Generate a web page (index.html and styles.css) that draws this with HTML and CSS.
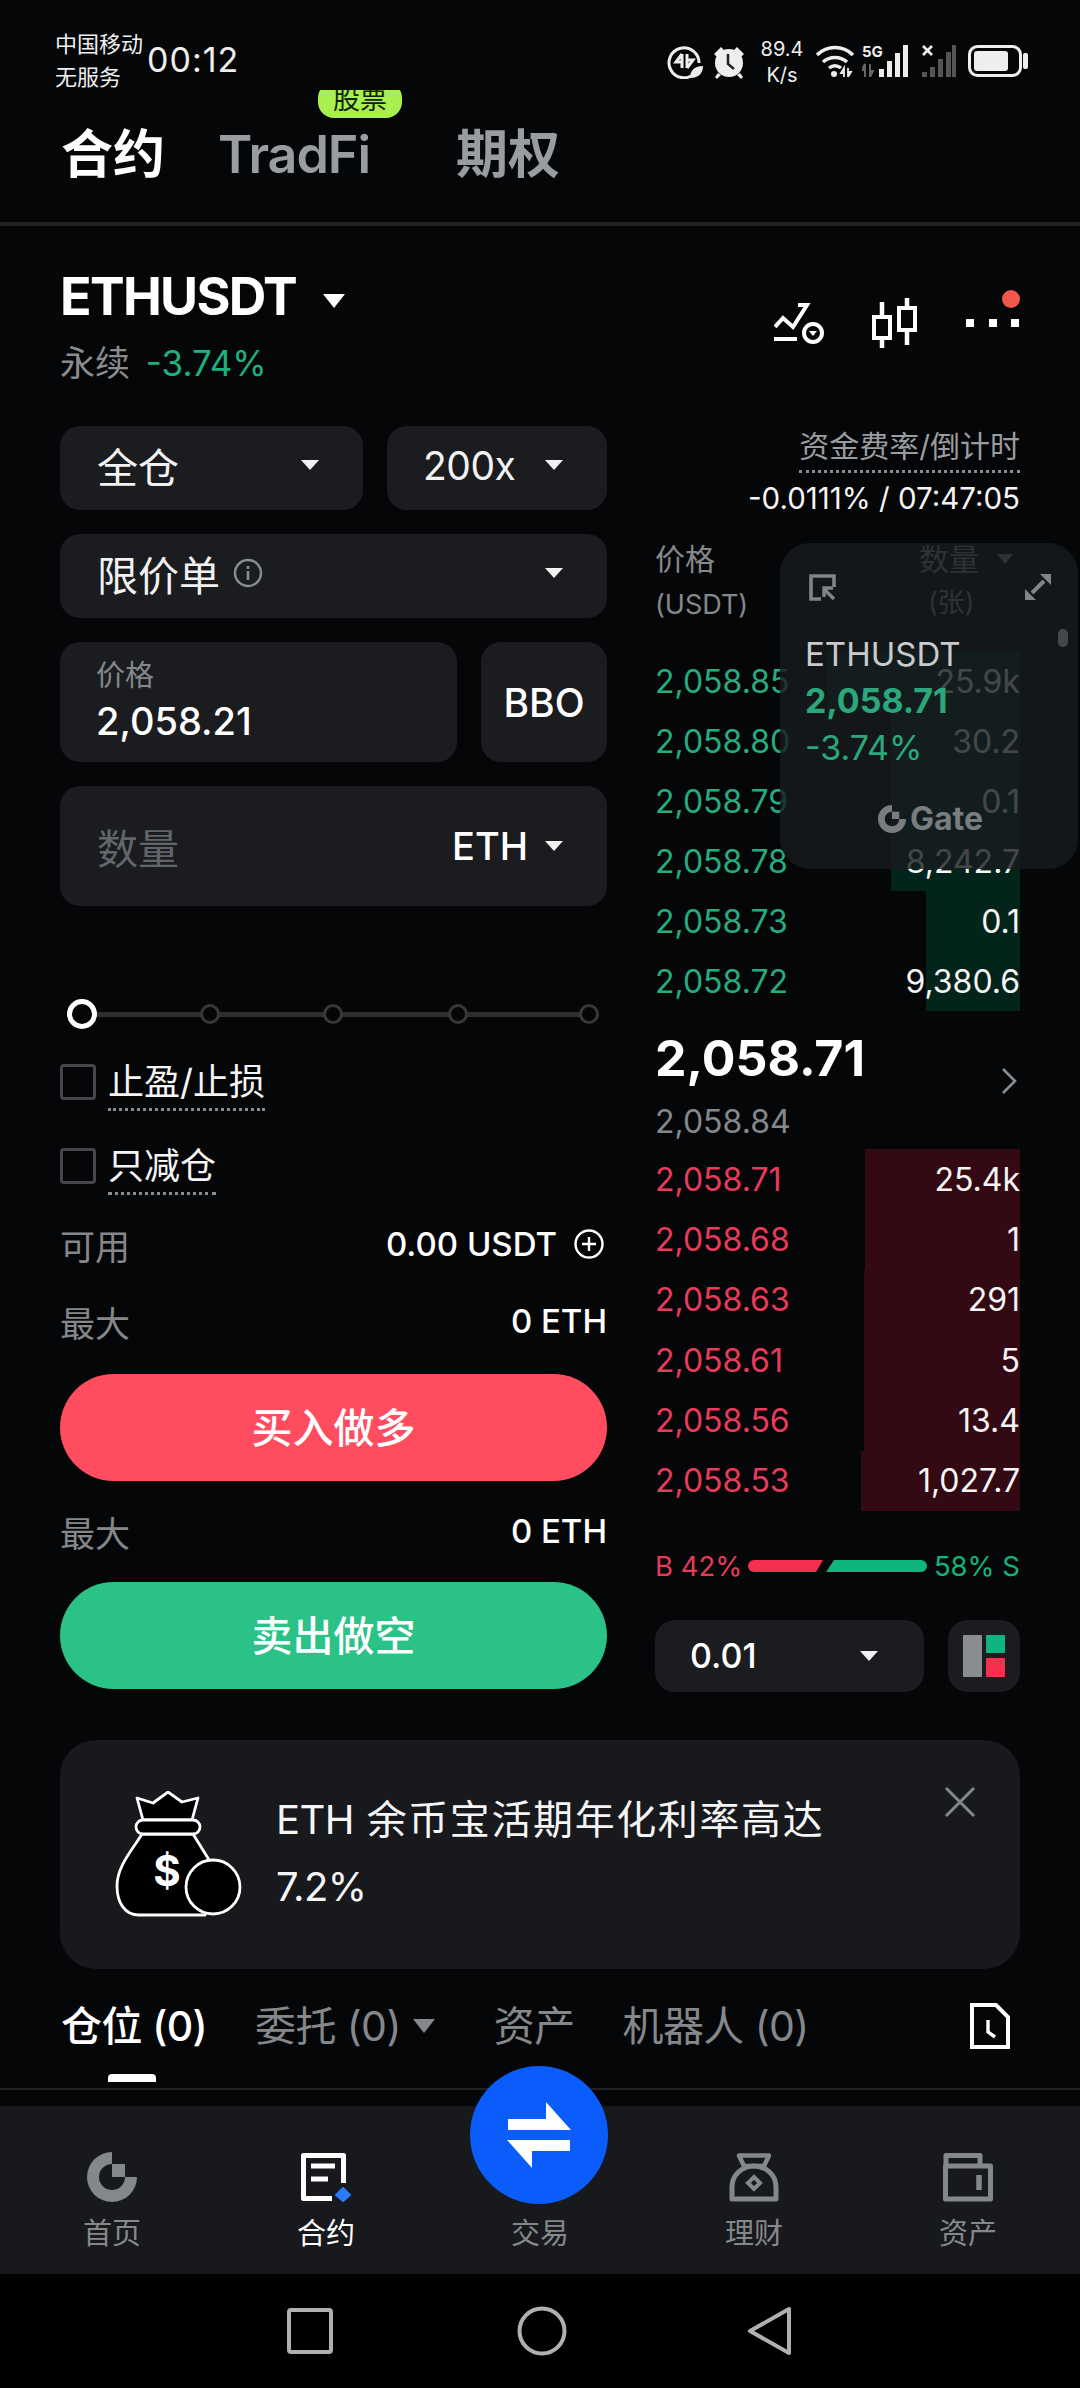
FILE: index.html
```html
<!DOCTYPE html>
<html lang="zh">

<head>
    <meta charset="utf-8">
    <title>ETHUSDT</title>
    <link rel="stylesheet" href="styles.css">
</head>

<body>
    <div class="status-bar">
        <div class="carrier">
            <span>中国移动</span>
            <span>无服务</span>
        </div>
        <div class="clock">00:12</div>
        <div class="status-icons">
            <svg class="st-data" width="36" height="34" viewBox="0 0 36 34">
                <path d="M27 29A15 15 0 1 1 32 18" fill="none" stroke="#eee" stroke-width="3" />
                <path d="M15 9v14M15 9l-6 8h6M20 9v14M20 23l6-8h-6" fill="none" stroke="#eee" stroke-width="3" />
                <path d="M23 33c0-8 5-12 13-12 0 8-5 12-13 12z" fill="#eee" />
            </svg>
            <svg class="st-alarm" width="32" height="34" viewBox="0 0 32 34">
                <path d="M1 9l7-7 3 3-7 7zM31 9l-7-7-3 3 7 7zM5 28l-3 4 2 2 4-4zM27 28l3 4-2 2-4-4z" fill="#eee" />
                <circle cx="16" cy="18" r="14" fill="#eee" />
                <path d="M15 9v10l6 5" fill="none" stroke="#222" stroke-width="2.5" />
            </svg>
            <div class="speed">
                <span>89.4</span>
                <span>K/s</span>
            </div>
            <svg class="st-wifi" width="38" height="32" viewBox="0 0 38 32">
                <path d="M1 10c10-10 26-10 36 0M7 17c7-6 17-6 24 0M13 23c4-3 8-3 12 0" fill="none" stroke="#eee" stroke-width="3.4" />
                <circle cx="18" cy="29" r="3" fill="#eee" />
                <path d="M28 32v-9l-3 5h3M32 23v9l3-5h-3" fill="none" stroke="#eee" stroke-width="1.8" />
            </svg>
            <div class="signal">
                <span class="signal-label">5G</span>
                <svg width="50" height="32" viewBox="0 0 50 32">
                    <path d="M3 32V19l-3 6h3M8 19v13l3-6H8" fill="none" stroke="#666" stroke-width="2" />
                    <rect x="17" y="24" width="5" height="8" fill="#eee" />
                    <rect x="25" y="16" width="5" height="16" fill="#eee" />
                    <rect x="33" y="8" width="5" height="24" fill="#eee" />
                    <rect x="41" y="0" width="5" height="32" fill="#eee" />
                </svg>
            </div>
            <svg class="st-signal2" width="34" height="32" viewBox="0 0 34 32">
                <path d="M1 1l9 9M10 1l-9 9" stroke="#eee" stroke-width="2.6" />
                <rect x="0" y="27" width="5" height="5" fill="#555" />
                <rect x="8" y="22" width="5" height="10" fill="#555" />
                <rect x="16" y="14" width="5" height="18" fill="#555" />
                <rect x="24" y="7" width="5" height="25" fill="#555" />
                <rect x="30" y="0" width="4" height="32" fill="#555" />
            </svg>
            <svg class="st-battery" width="60" height="32" viewBox="0 0 60 32">
                <rect x="1.5" y="1.5" width="51" height="29" rx="8" fill="none" stroke="#eee" stroke-width="3" />
                <rect x="6" y="6" width="34" height="20" rx="3" fill="#eee" />
                <rect x="55" y="8" width="5" height="16" rx="2" fill="#eee" />
            </svg>
        </div>
    </div>

    <div class="market-tabs">
        <span class="market-tab active">合约</span>
        <span class="market-tab tradfi">TradFi<span class="badge">股票</span></span>
        <span class="market-tab">期权</span>
    </div>

    <div class="symbol-bar">
        <div>
            <div class="symbol">ETHUSDT<i class="caret caret-symbol"></i></div>
            <div class="symbol-sub">永续 <span class="change">-3.74%</span></div>
        </div>
        <div class="symbol-icons">
            <svg width="50" height="60" viewBox="0 0 50 60">
                <path d="M1 37l8-9 10 9L33 15H24" fill="none" stroke="#fff" stroke-width="4" />
                <path d="M0 49h23" stroke="#fff" stroke-width="4" />
                <circle cx="39" cy="43" r="9" fill="none" stroke="#fff" stroke-width="4" />
                <path d="M35 41h8l-4 5z" fill="#fff" />
            </svg>
            <svg width="46" height="60" viewBox="0 0 46 60">
                <path d="M11 12v15M11 48v10M36 8v10M36 40v15" stroke="#fff" stroke-width="4.5" fill="none" />
                <rect x="3" y="27" width="16" height="21" fill="none" stroke="#fff" stroke-width="4" />
                <rect x="28" y="18" width="16" height="22" fill="none" stroke="#fff" stroke-width="4" />
            </svg>
            <svg width="56" height="60" viewBox="0 0 56 60">
                <rect x="2" y="29" width="8" height="8" fill="#fff" />
                <rect x="25" y="29" width="8" height="8" fill="#fff" />
                <rect x="47" y="29" width="8" height="8" fill="#fff" />
                <circle cx="47" cy="9" r="9" fill="#f0584a" />
            </svg>
        </div>
    </div>

    <div class="trade">
        <div class="order-form">
            <div class="field-row">
                <div class="pill margin-mode">全仓 <i class="caret"></i></div>
                <div class="pill leverage">200x <i class="caret"></i></div>
            </div>
            <div class="pill order-type">
                <span class="order-type-label">限价单
                    <svg width="30" height="30" viewBox="0 0 30 30">
                        <circle cx="15" cy="15" r="13" fill="none" stroke="#8a8d90" stroke-width="2.4" />
                        <path d="M15 13v9M15 8v3" stroke="#8a8d90" stroke-width="2.6" />
                    </svg>
                </span>
                <i class="caret"></i>
            </div>
            <div class="field-row">
                <div class="box price-box">
                    <span class="box-label">价格</span>
                    <span class="box-value">2,058.21</span>
                </div>
                <div class="box bbo">BBO</div>
            </div>
            <div class="box qty-box">
                <span class="qty-placeholder">数量</span>
                <span class="qty-unit">ETH <i class="caret"></i></span>
            </div>

            <div class="slider">
                <i class="knob"></i>
                <i class="node"></i>
                <i class="node"></i>
                <i class="node"></i>
                <i class="node"></i>
            </div>

            <div class="check-row"><i class="checkbox"></i><span class="check-label">止盈/止损</span></div>
            <div class="check-row second"><i class="checkbox"></i><span class="check-label">只减仓</span></div>

            <div class="info-row avail">
                <span class="info-key">可用</span>
                <span class="info-val">0.00 USDT
                    <svg width="30" height="30" viewBox="0 0 30 30">
                        <circle cx="15" cy="15" r="13.5" fill="none" stroke="#fff" stroke-width="2.4" />
                        <path d="M15 8v14M8 15h14" stroke="#fff" stroke-width="2.4" />
                    </svg>
                </span>
            </div>
            <div class="info-row max-1">
                <span class="info-key">最大</span>
                <span class="info-val">0 ETH</span>
            </div>
            <div class="action buy">买入做多</div>
            <div class="info-row max-2">
                <span class="info-key">最大</span>
                <span class="info-val">0 ETH</span>
            </div>
            <div class="action sell">卖出做空</div>
        </div>

        <div class="book">
            <div class="funding">
                <span class="funding-label">资金费率/倒计时</span>
                <span class="funding-value">-0.0111% / 07:47:05</span>
            </div>
            <div class="book-head">
                <div>价格<br><small>(USDT)</small></div>
                <div class="book-head-right">
                    <span class="book-head-qty">数量 <i class="caret caret-dim"></i></span>
                    <small class="book-head-unit">(张)</small>
                </div>
            </div>

            <div class="rows asks">
                <div class="row"><span class="px">2,058.85</span><span class="qty" style="width:193px">25.9k</span></div>
                <div class="row"><span class="px">2,058.80</span><span class="qty" style="width:129px">30.2</span></div>
                <div class="row"><span class="px">2,058.79</span><span class="qty" style="width:129px">0.1</span></div>
                <div class="row"><span class="px">2,058.78</span><span class="qty" style="width:129px">8,242.7</span></div>
                <div class="row"><span class="px">2,058.73</span><span class="qty" style="width:94px">0.1</span></div>
                <div class="row"><span class="px">2,058.72</span><span class="qty" style="width:94px">9,380.6</span></div>
            </div>

            <div class="last-price">
                <span>2,058.71</span>
                <svg width="16" height="28" viewBox="0 0 16 28">
                    <path d="M2 2l12 12L2 26" fill="none" stroke="#8a8d90" stroke-width="2.6" />
                </svg>
            </div>
            <div class="mark-price">2,058.84</div>

            <div class="rows bids">
                <div class="row"><span class="px">2,058.71</span><span class="qty" style="width:155px">25.4k</span></div>
                <div class="row"><span class="px">2,058.68</span><span class="qty" style="width:155px">1</span></div>
                <div class="row"><span class="px">2,058.63</span><span class="qty" style="width:156px">291</span></div>
                <div class="row"><span class="px">2,058.61</span><span class="qty" style="width:156px">5</span></div>
                <div class="row"><span class="px">2,058.56</span><span class="qty" style="width:156px">13.4</span></div>
                <div class="row"><span class="px">2,058.53</span><span class="qty" style="width:159px">1,027.7</span></div>
            </div>

            <div class="ratio">
                <span class="ratio-b">B 42%</span>
                <svg width="180" height="12" viewBox="0 0 180 12">
                    <path d="M6 0H75L68 12H6A6 6 0 0 1 6 0z" fill="#f5304f" />
                    <path d="M86 0H173A6 6 0 0 1 173 12H78z" fill="#0fb57e" />
                </svg>
                <span class="ratio-s">58% S</span>
            </div>

            <div class="book-tools">
                <div class="step">0.01 <i class="caret"></i></div>
                <div class="layout-btn">
                    <svg width="42" height="42" viewBox="0 0 42 42">
                        <rect x="0" y="0" width="19" height="42" rx="1" fill="#8a8d90" />
                        <rect x="23" y="0" width="19" height="18" rx="1" fill="#0fb57e" />
                        <rect x="23" y="23" width="19" height="19" rx="1" fill="#f5304f" />
                    </svg>
                </div>
            </div>

            <div class="float-window">
                <div class="float-top">
                    <svg width="28" height="28" viewBox="0 0 28 28">
                        <path d="M13 26H3V3h23v11" fill="none" stroke="#808487" stroke-width="3.6" />
                        <path d="M26 26L17 17M16 24v-9h9" fill="none" stroke="#808487" stroke-width="3.4" />
                    </svg>
                    <svg width="28" height="28" viewBox="0 0 28 28">
                        <path d="M8 20L20 8" stroke="#808487" stroke-width="4" />
                        <path d="M16 1H27V12zM1 16V27H12z" fill="#808487" />
                    </svg>
                </div>
                <i class="float-scroll"></i>
                <div class="float-symbol">ETHUSDT</div>
                <div class="float-price">2,058.71</div>
                <div class="float-change">-3.74%</div>
                <div class="float-brand">
                    <svg width="28" height="28" viewBox="0 0 50 50">
                        <path d="M25 0A25 25 0 1 0 50 25H38A13 13 0 1 1 25 12z" fill="#7a7d80" />
                        <rect x="25" y="12" width="13" height="13" fill="#7a7d80" />
                    </svg>
                    <span>Gate</span>
                </div>
            </div>
        </div>
    </div>

    <div class="promo">
        <svg class="promo-icon" width="127" height="127" viewBox="0 0 127 127">
            <path d="M28 29L22 7l16 5L53 1l14 10 16-4-6 22z" fill="#000" stroke="#fff" stroke-width="2.8" stroke-linejoin="round" />
            <path d="M27 43C18 58 2 75 2 95c0 17 8 29 22 29h66l6-52-18-29z" fill="#000" stroke="#fff" stroke-width="2.8" stroke-linejoin="round" />
            <rect x="21" y="29" width="64" height="14" rx="7" fill="#000" stroke="#fff" stroke-width="2.8" />
            <text x="52" y="95" class="promo-dollar">$</text>
            <circle cx="98" cy="96" r="27" fill="#000" stroke="#fff" stroke-width="2.8" />
        </svg>
        <div class="promo-text">
            <div><span class="promo-eth">ETH</span> 余币宝活期年化利率高达</div>
            <div class="promo-rate">7.2%</div>
        </div>
        <svg class="promo-close" width="32" height="32" viewBox="0 0 32 32">
            <path d="M2 2l28 28M30 2L2 30" stroke="#85888b" stroke-width="3" />
        </svg>
    </div>

    <div class="pos-tabs">
        <span class="pos-tab active">仓位 (0)</span>
        <span class="pos-tab has-caret">委托 (0) <i class="caret caret-gray"></i></span>
        <span class="pos-tab">资产</span>
        <span class="pos-tab">机器人 (0)</span>
        <svg class="pos-file" width="40" height="46" viewBox="0 0 40 46">
            <path d="M2 2h24l12 12v30H2z" fill="none" stroke="#fff" stroke-width="4" />
            <path d="M18 17v12l7 5" fill="none" stroke="#fff" stroke-width="3.4" />
        </svg>
    </div>

    <div class="nav-gap"></div>

    <div class="bottom-nav">
        <div class="trade-btn">
            <svg width="64" height="66" viewBox="0 0 64 66">
                <path d="M1 17H39V0L64 28H1zM63 38V49H25V66L0 38z" fill="#fff" />
            </svg>
        </div>
        <div class="nav-item">
            <svg width="50" height="50" viewBox="0 0 50 50">
                <path d="M25 0A25 25 0 1 0 50 25H38A13 13 0 1 1 25 12z" fill="#85888b" />
                <rect x="25" y="12" width="13" height="13" fill="#85888b" />
            </svg>
            <span>首页</span>
        </div>
        <div class="nav-item current">
            <svg width="50" height="50" viewBox="0 0 50 50">
                <path d="M31 46.5H2.5V3.5H42.5V31" fill="none" stroke="#fff" stroke-width="5" stroke-linejoin="round" />
                <path d="M10 14h24M10 27h17" stroke="#fff" stroke-width="5" />
                <path d="M42 36l7 7-7 6-7-6z" fill="#2a7bff" stroke="#2a7bff" stroke-width="2" stroke-linejoin="round" />
            </svg>
            <span>合约</span>
        </div>
        <div class="nav-item">
            <div class="nav-spacer"></div>
            <span>交易</span>
        </div>
        <div class="nav-item">
            <svg width="50" height="50" viewBox="0 0 50 50">
                <path d="M10 3.5H40L35 14H15z" fill="none" stroke="#85888b" stroke-width="4.5" stroke-linejoin="round" />
                <path d="M3 47V35C3 23 13 14 25 14S47 23 47 35V47z" fill="none" stroke="#85888b" stroke-width="5" stroke-linejoin="round" />
                <path d="M25 25l6 6-6 6-6-6z" fill="none" stroke="#85888b" stroke-width="4" />
            </svg>
            <span>理财</span>
        </div>
        <div class="nav-item">
            <svg width="50" height="50" viewBox="0 0 50 50">
                <path d="M3 15V3.5H37V14" fill="none" stroke="#85888b" stroke-width="5" stroke-linejoin="round" />
                <path d="M2.5 14H47.5V47H2.5z" fill="none" stroke="#85888b" stroke-width="5" stroke-linejoin="round" />
                <path d="M36 23v15" stroke="#85888b" stroke-width="5.5" />
            </svg>
            <span>资产</span>
        </div>
    </div>

    <div class="sys-nav">
        <svg width="46" height="50" viewBox="0 0 46 50">
            <rect x="2" y="4" width="42" height="42" rx="2" fill="none" stroke="#b0b0b0" stroke-width="4" />
        </svg>
        <svg class="sys-home" width="50" height="50" viewBox="0 0 50 50">
            <circle cx="25" cy="25" r="22.5" fill="none" stroke="#b0b0b0" stroke-width="4" />
        </svg>
        <svg width="46" height="50" viewBox="0 0 46 50">
            <path d="M42 3V47L3 25z" fill="none" stroke="#b0b0b0" stroke-width="4" stroke-linejoin="round" />
        </svg>
    </div>
</body>

</html>
```

FILE: styles.css
```css
* {
    box-sizing: border-box;
}

html,
body {
    margin: 0;
    padding: 0;
}

body {
    width: 1080px;
    height: 2388px;
    overflow: hidden;
    background-color: #050607;
    color: #fff;
    font-family: Inter, "Noto Sans CJK SC", sans-serif;
}

i {
    display: block;
    font-style: normal;
}

.caret {
    display: inline-block;
    width: 0;
    height: 0;
    border-left: 9px solid transparent;
    border-right: 9px solid transparent;
    border-top: 10px solid #f2f2f2;
}

/* status bar */
.status-bar {
    position: relative;
    z-index: 2;
    display: flex;
    height: 90px;
    padding: 28px 52px 0 55px;
    background-color: #050607;
}

.carrier {
    display: flex;
    flex-direction: column;
    font-size: 22px;
    line-height: 33px;
    color: #eee;
}

.clock {
    margin: 14px 0 0 4px;
    font-size: 34px;
    line-height: 36px;
    letter-spacing: 1px;
    color: #eee;
}

.status-icons {
    display: flex;
    align-items: flex-start;
    margin-left: auto;
    padding-top: 17px;
}

.st-alarm {
    margin-left: 10px;
}

.speed {
    display: flex;
    flex-direction: column;
    align-items: center;
    width: 46px;
    margin: -9px 0 0 14px;
    font-size: 20px;
    line-height: 26px;
    color: #eee;
}

.st-wifi {
    margin-left: 11px;
}

.signal {
    position: relative;
    margin-left: 8px;
}

.signal-label {
    position: absolute;
    left: 0;
    top: -1px;
    font-size: 15px;
    line-height: 15px;
    font-weight: 700;
    color: #eee;
}

.st-signal2 {
    margin-left: 10px;
}

.st-battery {
    margin-left: 12px;
}

/* market tabs */
.market-tabs {
    display: flex;
    align-items: center;
    height: 136px;
    padding: 0 0 3px 61px;
    border-bottom: 4px solid #1f2123;
}

.market-tab {
    position: relative;
    font-size: 52px;
    line-height: 70px;
    font-weight: 600;
    color: #9a9da0;
}

.market-tab.active {
    color: #fff;
}

.tradfi {
    margin: 0 86px 0 53px;
    letter-spacing: -1px;
}

.badge {
    position: absolute;
    left: 100px;
    top: -38px;
    width: 84px;
    height: 36px;
    border-radius: 16px;
    background-color: #a8f04f;
    color: #14210a;
    font-size: 27px;
    line-height: 36px;
    font-weight: 400;
    letter-spacing: 0;
    text-align: center;
}

/* symbol header */
.symbol-bar {
    display: flex;
    justify-content: space-between;
    height: 200px;
    padding: 41px 60px 0 60px;
}

.symbol {
    font-size: 52px;
    line-height: 60px;
    font-weight: 700;
    letter-spacing: -1.7px;
}

.caret-symbol {
    margin: 0 0 7px 27px;
    border-left-width: 11px;
    border-right-width: 11px;
    border-top-width: 14px;
    border-top-color: #fff;
}

.symbol-sub {
    margin-top: 13px;
    font-size: 35px;
    line-height: 46px;
    color: #8a8d90;
}

.change {
    margin-left: 6px;
    color: #1fb07f;
}

.symbol-icons {
    display: flex;
    gap: 47px;
    margin-top: 23px;
    height: 60px;
}

/* layout columns */
.trade {
    display: flex;
    justify-content: space-between;
    padding: 0 60px;
}

.order-form {
    width: 547px;
}

.book {
    position: relative;
    width: 365px;
}

/* order form */
.field-row {
    display: flex;
    gap: 24px;
}

.pill {
    display: flex;
    align-items: center;
    justify-content: space-between;
    height: 84px;
    padding: 0 44px 6px 37px;
    border-radius: 20px;
    background-color: #1a1c1f;
    font-size: 41px;
    color: #f2f2f2;
}

.margin-mode {
    width: 303px;
}

.leverage {
    width: 220px;
    padding-left: 36px;
    font-size: 39px;
    letter-spacing: -0.5px;
}

.order-type {
    margin-top: 24px;
}

.order-type-label {
    display: flex;
    align-items: center;
    gap: 13px;
}

.box {
    border-radius: 20px;
    background-color: #1a1c1f;
    height: 120px;
    margin-top: 24px;
}

.price-box {
    display: flex;
    flex-direction: column;
    flex: 1;
    padding: 14px 0 0 36px;
}

.box-label {
    font-size: 29px;
    line-height: 40px;
    color: #85888b;
}

.box-value {
    font-size: 38px;
    line-height: 50px;
    font-weight: 500;
}

.bbo {
    display: flex;
    align-items: center;
    justify-content: center;
    width: 126px;
    font-size: 39px;
    font-weight: 500;
}

.qty-box {
    display: flex;
    align-items: center;
    justify-content: space-between;
    padding: 0 44px 0 37px;
}

.qty-placeholder {
    font-size: 41px;
    color: #62656a;
}

.qty-unit {
    display: flex;
    align-items: center;
    gap: 17px;
    font-size: 38px;
    font-weight: 500;
}

.slider {
    display: flex;
    align-items: center;
    width: 539px;
    height: 30px;
    margin-top: 93px;
    padding: 0 0 0 7px;
    background: linear-gradient(#2c2e30, #2c2e30) 20px center / 510px 5px no-repeat;
}

.knob {
    width: 30px;
    height: 30px;
    border: 5px solid #fff;
    border-radius: 50%;
    background-color: #050607;
}

.node {
    width: 20px;
    height: 20px;
    margin-left: 103px;
    border: 3px solid #36383a;
    border-radius: 50%;
    background-color: #050607;
}

.node:nth-child(4) {
    margin-left: 105px;
}

.node:nth-child(5) {
    margin-left: 111px;
}

.check-row {
    display: flex;
    align-items: flex-start;
    margin-top: 35px;
    height: 50px;
}

.check-row.second {
    margin-top: 34px;
}

.checkbox {
    width: 36px;
    height: 36px;
    margin-right: 12px;
    border: 3px solid #45474a;
    border-radius: 4px;
}

.check-label {
    height: 47px;
    font-size: 36px;
    line-height: 36px;
    border-bottom: 3px dotted #8a8d90;
    color: #f5f5f5;
}

.info-row {
    display: flex;
    align-items: center;
    justify-content: space-between;
    height: 46px;
    font-size: 35px;
}

.avail {
    margin-top: 23px;
    padding-right: 3px;
}

.max-1 {
    margin-top: 31px;
}

.max-2 {
    margin-top: 27px;
}

.info-key {
    color: #85888b;
}

.info-val {
    display: flex;
    align-items: center;
    gap: 17px;
    font-size: 33px;
    font-weight: 500;
}

.action {
    display: flex;
    align-items: center;
    justify-content: center;
    height: 107px;
    padding-bottom: 5px;
    border-radius: 54px;
    font-size: 41px;
    font-weight: 500;
}

.buy {
    margin-top: 30px;
    background-color: #ff4d5f;
}

.sell {
    margin-top: 28px;
    background-color: #2bc287;
}

/* order book */
.funding {
    display: flex;
    flex-direction: column;
    align-items: flex-end;
}

.funding-label {
    height: 47px;
    font-size: 30px;
    line-height: 40px;
    border-bottom: 3px dotted #8a8d90;
    color: #9a9da0;
}

.funding-value {
    margin-top: 5px;
    font-size: 29.5px;
    line-height: 40px;
    color: #f5f5f5;
}

.book-head {
    display: flex;
    justify-content: space-between;
    height: 100px;
    margin-top: 19px;
    font-size: 30px;
    line-height: 44px;
    color: #85888b;
}

.book-head small {
    font-size: 27px;
}

.book-head-right {
    display: flex;
    flex-direction: column;
    width: 101px;
}

.book-head-qty {
    display: flex;
    align-items: center;
    gap: 18px;
}

.book-head-unit {
    margin-left: 9px;
}

.caret-dim {
    border-top-color: #85888b;
    border-left-width: 8px;
    border-right-width: 8px;
    border-top-width: 10px;
}

.rows {
    font-size: 32px;
}

.asks {
    margin-top: 14px;
}

.asks .row {
    height: 60px;
}

.bids .row {
    height: 60.33px;
}

.row {
    display: flex;
    align-items: center;
    justify-content: space-between;
    white-space: nowrap;
}

.qty {
    display: flex;
    align-items: center;
    justify-content: flex-end;
    height: 100%;
    color: #f5f5f5;
}

.asks .px {
    color: #25ad80;
}

.asks .qty {
    background-color: #03241a;
}

.bids .px {
    color: #e93a5b;
}

.bids .qty {
    background-color: #330a13;
}

.last-price {
    display: flex;
    align-items: flex-end;
    justify-content: space-between;
    height: 84px;
    padding-right: 3px;
    font-size: 50px;
    line-height: 74px;
    font-weight: 700;
}

.mark-price {
    height: 54px;
    font-size: 32px;
    line-height: 54px;
    color: #85888b;
}

.ratio {
    display: flex;
    align-items: center;
    justify-content: space-between;
    height: 34px;
    margin-top: 38px;
    font-size: 27.5px;
    white-space: nowrap;
}

.ratio-b {
    color: #e93a5b;
}

.ratio-s {
    color: #0fb57e;
}

.book-tools {
    display: flex;
    justify-content: space-between;
    margin-top: 37px;
}

.step {
    display: flex;
    align-items: center;
    justify-content: space-between;
    width: 269px;
    height: 72px;
    padding: 0 46px 0 35px;
    border-radius: 20px;
    background-color: #1a1c1f;
    font-size: 34px;
    font-weight: 500;
}

.layout-btn {
    display: flex;
    align-items: center;
    justify-content: center;
    width: 72px;
    height: 72px;
    border-radius: 20px;
    background-color: #1a1c1f;
}

/* floating window */
.float-window {
    position: absolute;
    left: 125px;
    top: 117px;
    width: 298px;
    height: 326px;
    padding: 30px 26px 0 25px;
    border-radius: 30px;
    background-color: rgba(24, 28, 30, 0.8);
}

.float-top {
    display: flex;
    justify-content: space-between;
    padding-left: 3px;
}

.float-scroll {
    position: absolute;
    right: 10px;
    top: 86px;
    width: 10px;
    height: 18px;
    border-radius: 5px;
    background-color: #45484a;
}

.float-symbol {
    margin-top: 30px;
    font-size: 33px;
    line-height: 46px;
    color: #c9cbcc;
}

.float-price {
    font-size: 34px;
    line-height: 48px;
    font-weight: 700;
    color: #2aa87c;
}

.float-change {
    font-size: 34px;
    line-height: 46px;
    color: #2aa87c;
}

.float-brand {
    display: flex;
    align-items: center;
    gap: 4px;
    margin: 28px 0 0 73px;
    font-size: 32px;
    line-height: 40px;
    font-weight: 700;
    color: #7a7d80;
}

/* promo banner */
.promo {
    position: relative;
    display: flex;
    height: 229px;
    margin: 48px 60px 0;
    padding: 51px 0 0 55px;
    border-radius: 36px;
    background-color: #17191c;
}

.promo-dollar {
    font-size: 42px;
    font-weight: 700;
    text-anchor: middle;
    fill: #fff;
}

.promo-text {
    margin: -5px 0 0 34px;
    font-size: 40px;
    line-height: 67px;
    letter-spacing: 1.6px;
    color: #f5f5f5;
}

.promo-eth,
.promo-rate {
    letter-spacing: -0.6px;
}

.promo-close {
    position: absolute;
    right: 44px;
    top: 46px;
}

/* position tabs */
.pos-tabs {
    display: flex;
    align-items: center;
    height: 121px;
    padding: 0 70px 4px 61px;
    border-bottom: 2px solid #1f2123;
}

.pos-tab {
    position: relative;
    display: flex;
    align-items: center;
    gap: 8px;
    margin-right: 48px;
    font-size: 41px;
    line-height: 60px;
    letter-spacing: -0.6px;
    white-space: nowrap;
    color: #85888b;
}

.pos-tab.has-caret {
    margin-right: 59px;
}

.pos-tab.active {
    color: #fff;
    font-weight: 500;
}

.pos-tab.active::after {
    content: "";
    position: absolute;
    left: 47px;
    top: 78px;
    width: 48px;
    height: 8px;
    border-radius: 4px 4px 0 0;
    background-color: #fff;
}

.caret-gray {
    margin-left: 4px;
    border-top-color: #85888b;
    border-left-width: 11px;
    border-right-width: 11px;
    border-top-width: 14px;
}

.pos-file {
    margin-left: auto;
}

.nav-gap {
    height: 16px;
}

/* bottom nav */
.bottom-nav {
    position: relative;
    display: grid;
    grid-template-columns: repeat(5, 1fr);
    height: 168px;
    padding: 46px 5px 0;
    background-color: #17191c;
}

.trade-btn {
    position: absolute;
    left: 470px;
    top: -40px;
    display: flex;
    align-items: center;
    justify-content: center;
    width: 138px;
    height: 138px;
    border-radius: 50%;
    background-color: #0a5cfb;
}

.nav-item {
    display: flex;
    flex-direction: column;
    align-items: center;
    gap: 12px;
    font-size: 29px;
    line-height: 40px;
    color: #85888b;
}

.nav-item.current {
    color: #fff;
}

.nav-spacer {
    height: 50px;
}

.sys-nav {
    display: flex;
    align-items: center;
    justify-content: center;
    height: 115px;
    background-color: #000;
}

.sys-home {
    margin: 0 180px 0 184px;
}
```
